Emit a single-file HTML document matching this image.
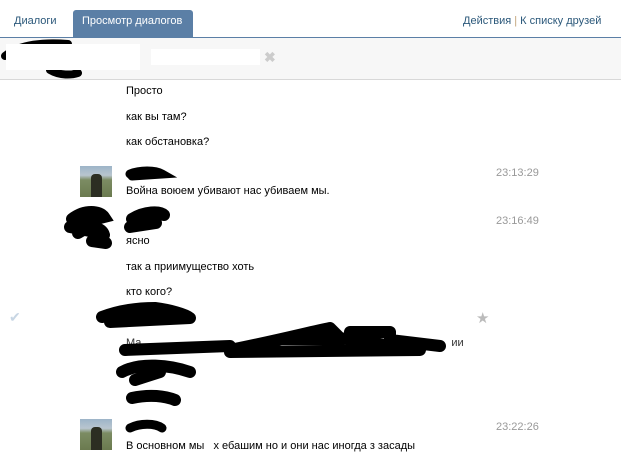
<!DOCTYPE html>
<html><head><meta charset="utf-8"><style>
body{margin:0;width:621px;height:468px;background:#fff;position:relative;overflow:hidden;font-family:"Liberation Sans",sans-serif;font-size:11px;color:#000}
.a{position:absolute;white-space:nowrap}
.m{margin-top:1px}
.t{color:#999}
.av{position:absolute;width:32px;height:31px;background:linear-gradient(#9db4c8 0,#b9c6cf 30%,#7c8c63 45%,#6b7a4f 100%)}
.av:after{content:"";position:absolute;left:11px;top:8px;width:11px;height:23px;background:#2c2e22;border-radius:4px 4px 0 0}
</style></head><body>
<div class="a" style="left:0;top:0;width:621px;height:37px;border-bottom:1px solid #5b7fa6"></div>
<div class="a" style="left:14px;top:15px;color:#2b587a">Диалоги</div>
<div class="a" style="left:73px;top:10px;width:120px;height:28px;background:#5b7fa6;border-radius:3px 3px 0 0"></div>
<div class="a" style="left:82px;top:15px;color:#fff">Просмотр диалогов</div>
<div class="a" style="left:463px;top:15px;color:#2b587a">Действия <span style="color:#c3a47a">|</span> К списку друзей</div>
<div class="a" style="left:0;top:38px;width:621px;height:41px;background:#f7f7f7;border-bottom:1px solid #d8d8d8"></div>
<svg class="a" style="left:0;top:38px" width="100" height="45"><path d="M5 18 C20 6,45 4,68 6 M50 32 C60 38,72 37,78 35" stroke="#000" stroke-width="8" fill="none" stroke-linecap="round"/></svg>
<div class="a" style="left:6px;top:44px;width:134px;height:26px;background:#fff"></div>
<div class="a" style="left:151px;top:49px;width:109px;height:16px;background:#fff"></div>
<div class="a" style="left:264px;top:49px;color:#ccc;font-size:14px;font-weight:bold">✖</div>
<div class="a" style="left:126px;top:85px">Просто</div>
<div class="a" style="left:126px;top:111px">как вы там?</div>
<div class="a" style="left:126px;top:136px">как обстановка?</div>
<div class="av" style="left:80px;top:166px"></div>
<svg class="a" style="left:120px;top:164px" width="60" height="20"><path d="M10 10 C20 6,35 6,42 10 L12 12" stroke="#000" stroke-width="9" fill="none" stroke-linecap="round"/></svg>
<div class="a t" style="left:496px;top:167px">23:13:29</div>
<div class="a" style="left:126px;top:185px">Война воюем убивают нас убиваем мы.</div>
<svg class="a" style="left:60px;top:205px" width="120" height="45"><path d="M12 14 C25 4,40 6,44 12 L12 20 M18 28 C30 20,42 22,44 30 M32 36 L46 38 M10 22 L40 28 M72 14 C85 6,100 6,104 10 M70 22 L96 18" stroke="#000" stroke-width="12" fill="none" stroke-linecap="round"/></svg>
<div class="a t" style="left:496px;top:215px">23:16:49</div>
<div class="a" style="left:126px;top:235px">ясно</div>
<div class="a" style="left:126px;top:261px">так а приимущество хоть</div>
<div class="a" style="left:126px;top:286px">кто кого?</div>
<div class="a" style="left:9px;top:309px;color:#c8d6e4;font-size:14px">✔</div>
<div class="a" style="left:476px;top:309px;color:#bbb;font-size:15px">★</div>
<div class="a" style="left:126px;top:337px;color:#333">Ма<span style="margin-left:310px">ии</span></div>
<svg class="a" style="left:80px;top:300px" width="400" height="110"><path d="M22 17 C40 10,60 8,75 8 C90 10,105 14,110 18 L30 22 M45 50 L150 46 M150 50 C200 40,230 32,250 28 L260 38 L340 50 L150 52 M270 32 L310 32 L310 40 L360 46" stroke="#000" stroke-width="12" fill="none" stroke-linecap="round" stroke-linejoin="round"/><path d="M160 45 C200 35,230 28,250 27 L265 45 Z" fill="#000"/><path d="M42 72 C60 62,90 65,110 72 M55 80 L80 72 M52 98 C70 94,85 96,95 100" stroke="#000" stroke-width="12" fill="none" stroke-linecap="round"/></svg>
<div class="av" style="left:80px;top:419px"></div>
<svg class="a" style="left:120px;top:418px" width="60" height="20"><path d="M10 10 C20 5,35 5,42 10" stroke="#000" stroke-width="9" fill="none" stroke-linecap="round"/></svg>
<div class="a t" style="left:496px;top:421px">23:22:26</div>
<div class="a" style="left:126px;top:440px">В основном мы &nbsp; х ебашим но и они нас иногда з засады</div>
</body></html>
